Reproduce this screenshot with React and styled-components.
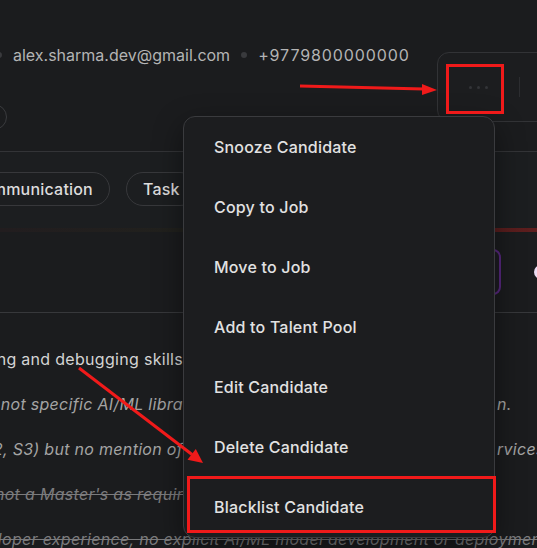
import styled, { createGlobalStyle } from "styled-components";

const GlobalStyle = createGlobalStyle`
  html, body {
    margin: 0;
    background: #1b1c1e;
  }
  body {
    font-family: Inter, "Noto Sans", sans-serif;
    -webkit-font-smoothing: antialiased;
  }
`;

const Viewport = styled.div`
  position: relative;
  width: 537px;
  height: 548px;
  overflow: hidden;
  background: #1b1c1e;
  color: #d8d8d8;
`;

/* ---------- candidate header ---------- */

const Header = styled.header`
  display: flex;
  justify-content: space-between;
  align-items: flex-start;
  height: 151px;
  box-sizing: border-box;
  padding-top: 43px;
`;

const Identity = styled.div`
  display: flex;
  flex-direction: column;
`;

const ContactRow = styled.div`
  display: flex;
  align-items: center;
  gap: 11px;
  margin-left: -4px;
  height: 24px;
  font-size: 16px;
  color: #b4b4b4;
  white-space: nowrap;
`;

const Phone = styled.span`
  letter-spacing: 0.9px;
`;

const Dot = styled.span`
  width: 6px;
  height: 6px;
  border-radius: 50%;
  background: #393a3d;
  flex: none;
`;

const Chip = styled.span`
  display: block;
  width: 60px;
  height: 26px;
  margin: 37px 0 0 -53px;
  box-sizing: border-box;
  border: 1px solid #3a3b3e;
  border-radius: 13px;
`;

const ActionGroup = styled.div`
  display: flex;
  align-items: center;
  width: 120px;
  height: 70px;
  margin: 9px -20px 0 0;
  padding-left: 9px;
  box-sizing: border-box;
  border: 1px solid #323336;
  border-radius: 12px;
  background: #1c1d1f;
`;

const MoreButton = styled.button`
  display: flex;
  align-items: center;
  justify-content: center;
  gap: 5px;
  width: 58px;
  height: 50px;
  padding: 0 0 0 4px;
  border: 0;
  background: transparent;
  cursor: pointer;
`;

const MoreDot = styled.span`
  width: 3px;
  height: 3px;
  border-radius: 50%;
  background: #333438;
`;

const Divider = styled.span`
  width: 1px;
  height: 20px;
  margin-left: 14px;
  background: #2c2d30;
`;

/* ---------- tabs ---------- */

const TabBand = styled.section`
  border-top: 1px solid #333437;
  background: #1c1e20;
`;

const TabRow = styled.div`
  display: flex;
  gap: 16px;
  padding: 20px 0 22px;
  margin-left: -47px;
`;

const Tab = styled.span`
  display: flex;
  align-items: center;
  height: 34px;
  padding: 0 16px;
  box-sizing: border-box;
  border: 1px solid #37383b;
  border-radius: 17px;
  font-size: 16px;
  font-weight: 500;
  letter-spacing: 0.2px;
  color: #dcdcdc;
  white-space: nowrap;
`;

const Stripe = styled.div`
  height: 4px;
  background: linear-gradient(
    90deg,
    #221d1f 0%,
    #21211d 35%,
    #2a1e1e 75%,
    #581d1d 92%,
    #5e1e1e 100%
  );
`;

/* ---------- toolbar ---------- */

const Toolbar = styled.div`
  display: flex;
  justify-content: flex-end;
  align-items: center;
  gap: 33px;
  height: 80px;
  margin-right: -37px;
  border-bottom: 1px solid #37383b;
`;

const StageButton = styled.button`
  width: 120px;
  height: 46px;
  border: 2px solid #58287f;
  border-radius: 8px;
  background: #1d1c22;
`;

const LightPill = styled.span`
  width: 40px;
  height: 14px;
  border-radius: 7px;
  background: #ecdcf2;
`;

/* ---------- evaluation notes ---------- */

const Notes = styled.div`
  padding-top: 23px;
`;

const tones = {
  strong: "#d4d4d4",
  note: "#a4a4a4",
  dropped: "#7b7b7d",
};

const Line = styled.div`
  display: ${(p) => (p.$full ? "flex" : "grid")};
  grid-template-columns: 183px 312px 1fr;
  align-items: center;
  height: 45px;
  font-size: 16px;
  letter-spacing: 0.3px;
  white-space: nowrap;
  color: ${(p) => tones[p.$tone]};
  font-style: ${(p) => (p.$tone === "strong" ? "normal" : "italic")};
  text-decoration: ${(p) => (p.$tone === "dropped" ? "line-through" : "none")};
  padding-left: ${(p) => (p.$full ? "2px" : "0")};
`;

const Seg = styled.span`
  display: flex;
  overflow: hidden;
  justify-content: ${(p) => (p.$end ? "flex-end" : "flex-start")};
  padding-left: ${(p) => (p.$tail ? "2px" : "0")};
`;

const Lead = styled.span`
  display: flex;
  justify-content: flex-end;
  width: 0;
`;

/* ---------- dropdown ---------- */

const Menu = styled.ul`
  position: absolute;
  top: 116px;
  left: 183px;
  width: 312px;
  margin: 0;
  padding: 0;
  list-style: none;
  box-sizing: border-box;
  border: 1px solid #3a3b3e;
  border-radius: 12px;
  background: #1c1d1f;
  box-shadow: 0 10px 30px rgba(0, 0, 0, 0.45);
`;

const MenuItem = styled.li`
  display: flex;
  align-items: center;
  height: 60px;
  padding-left: 30px;
  font-size: 16px;
  font-weight: 500;
  letter-spacing: 0.2px;
  color: #e2e2e2;
  cursor: pointer;
`;

const Annotations = styled.svg`
  position: absolute;
  inset: 0;
  pointer-events: none;
`;

const menuItems = [
  "Snooze Candidate",
  "Copy to Job",
  "Move to Job",
  "Add to Talent Pool",
  "Edit Candidate",
  "Delete Candidate",
  "Blacklist Candidate",
];

const notes = [
  { tone: "strong", left: "Strong problem-solving and debugging skills" },
  {
    tone: "note",
    left: "Uses Python daily but not specific AI/ML libra",
    mid: "ries like TensorFlow in productio",
    right: "n.",
  },
  {
    tone: "note",
    left: "Some cloud exposure (AWS EC2, S3) but no mention of",
    mid: " SageMaker or managed ML se",
    right: "rvices for model hosting.",
  },
  {
    tone: "dropped",
    left: "Bachelor's degree in Computer Science, not a Master's as requir",
    mid: "ed",
  },
];

const RED = "#f01a1a";

export default function App() {
  return (
    <>
      <GlobalStyle />
      <Viewport>
        <Header>
          <Identity>
            <ContactRow>
              <Dot />
              <span>alex.sharma.dev@gmail.com</span>
              <Dot />
              <Phone>+9779800000000</Phone>
            </ContactRow>
            <Chip />
          </Identity>
          <ActionGroup>
            <MoreButton aria-label="More actions">
              <MoreDot />
              <MoreDot />
              <MoreDot />
            </MoreButton>
            <Divider />
          </ActionGroup>
        </Header>

        <TabBand>
          <TabRow>
            <Tab>Communication</Tab>
            <Tab>Task</Tab>
            <Tab>Notes</Tab>
          </TabRow>
          <Stripe />
        </TabBand>

        <Toolbar>
          <StageButton />
          <LightPill />
        </Toolbar>

        <Notes>
          {notes.map((n, i) => (
            <Line key={i} $tone={n.tone}>
              <Seg $end>{n.left}</Seg>
              <Seg>{n.mid}</Seg>
              <Seg $tail>{n.right}</Seg>
            </Line>
          ))}
          <Line $full $tone="dropped">
            <Lead>Mostly web devel</Lead>
            oper experience, no explicit AI/ML model development or deployment
          </Line>
        </Notes>

        <Menu>
          {menuItems.map((label) => (
            <MenuItem key={label}>{label}</MenuItem>
          ))}
        </Menu>

        <Annotations width="537" height="548" viewBox="0 0 537 548">
          <line x1="300" y1="86" x2="424" y2="89" stroke={RED} strokeWidth="3" />
          <polygon points="437,90 422,84 422,95" fill={RED} />
          <rect x="447.5" y="65.5" width="55" height="47" fill="none" stroke={RED} strokeWidth="3" />
          <line x1="79" y1="368" x2="192" y2="454.5" stroke={RED} strokeWidth="3" />
          <polygon points="203,463 187.5,459.8 195.8,449" fill={RED} />
          <rect x="188.5" y="477.5" width="306" height="54" fill="none" stroke={RED} strokeWidth="3" />
        </Annotations>
      </Viewport>
    </>
  );
}
